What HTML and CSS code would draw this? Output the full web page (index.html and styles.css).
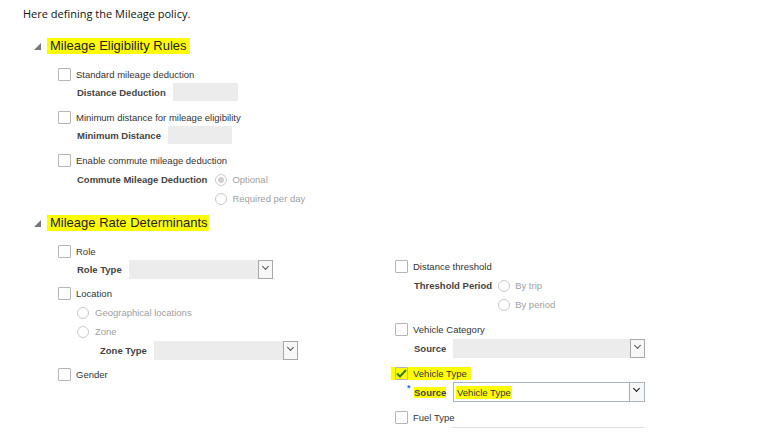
FILE: index.html
```html
<!DOCTYPE html>
<html lang="en">
  <head>
    <meta charset="UTF-8" />
    <title>Mileage Policy</title>
    <link rel="stylesheet" href="styles.css">
  </head>
  <body>
    <p class="intro">Here defining the Mileage policy.</p>

    <div class="section">
      <div class="section-title"><span class="caret"></span><span class="mark">Mileage Eligibility Rules</span></div>
      <div class="section-body">
        <div class="item">
          <div class="check-row"><span class="box"></span><span>Standard mileage deduction</span></div>
          <div class="field-row">
            <label class="field-label">Distance Deduction</label>
            <span class="text-input w65"></span>
          </div>
        </div>
        <div class="item">
          <div class="check-row"><span class="box"></span><span>Minimum distance for mileage eligibility</span></div>
          <div class="field-row">
            <label class="field-label">Minimum Distance</label>
            <span class="text-input w64"></span>
          </div>
        </div>
        <div class="item">
          <div class="check-row"><span class="box"></span><span>Enable commute mileage deduction</span></div>
          <div class="radio-group commute">
            <label class="field-label">Commute Mileage Deduction</label>
            <div class="radios">
              <div class="radio-row"><span class="radio on"></span><span>Optional</span></div>
              <div class="radio-row"><span class="radio"></span><span>Required per day</span></div>
            </div>
          </div>
        </div>
      </div>
    </div>

    <div class="section second">
      <div class="section-title"><span class="caret"></span><span class="mark">Mileage Rate Determinants</span></div>
      <div class="columns">
        <div class="col left">
          <div class="item">
            <div class="check-row"><span class="box"></span><span>Role</span></div>
            <div class="field-row">
              <label class="field-label">Role Type</label>
              <span class="select w144"><span class="arrow"></span></span>
            </div>
          </div>
          <div class="item">
            <div class="check-row"><span class="box"></span><span>Location</span></div>
            <div class="loc-radios">
              <div class="radio-row"><span class="radio"></span><span>Geographical locations</span></div>
              <div class="radio-row"><span class="radio"></span><span>Zone</span></div>
            </div>
            <div class="field-row zone">
              <label class="field-label">Zone Type</label>
              <span class="select w144"><span class="arrow"></span></span>
            </div>
          </div>
          <div class="item">
            <div class="check-row"><span class="box"></span><span>Gender</span></div>
          </div>
        </div>

        <div class="col right">
          <div class="item spaced">
            <div class="check-row"><span class="box"></span><span>Distance threshold</span></div>
            <div class="radio-group">
              <label class="field-label">Threshold Period</label>
              <div class="radios">
                <div class="radio-row"><span class="radio"></span><span>By trip</span></div>
                <div class="radio-row"><span class="radio"></span><span>By period</span></div>
              </div>
            </div>
          </div>
          <div class="item">
            <div class="check-row"><span class="box"></span><span>Vehicle Category</span></div>
            <div class="field-row">
              <label class="field-label src">Source</label>
              <span class="select w192"><span class="arrow"></span></span>
            </div>
          </div>
          <div class="item">
            <div class="check-row marked">
              <span class="box checked">
                <svg width="11" height="9" viewBox="0 0 11 9"><path d="M1 4.5 L4 7.5 L10 1" fill="none" stroke="#2e7d1e" stroke-width="2"/></svg>
              </span>
              <span>Vehicle Type</span>
            </div>
            <div class="field-row">
              <label class="field-label src req"><span class="star">*</span><span class="mark">Source</span></label>
              <span class="select w192 active"><span class="value mark">Vehicle Type</span><span class="arrow"></span></span>
            </div>
          </div>
          <div class="item">
            <div class="check-row"><span class="box"></span><span>Fuel Type</span></div>
            <div class="underline"></div>
          </div>
        </div>
      </div>
    </div>
  </body>
</html>
```

FILE: styles.css
```css
body {
  margin: 0;
  padding: 0;
  background-color: #fff;
  font-family: "Liberation Sans", Arial, sans-serif;
  font-size: 9.5px;
  color: #333;
}

.intro {
  margin: 0;
  padding: 6px 0 0 23px;
  font-family: "Open Sans", sans-serif;
  font-size: 11px;
  color: #111;
  line-height: 16px;
}

.section {
  padding-left: 34px;
}

.section-title {
  display: flex;
  align-items: center;
  height: 16px;
  margin-top: 16px;
  font-size: 13px;
  color: #222;
}

.caret {
  width: 0;
  height: 0;
  border-left: 7px solid transparent;
  border-bottom: 7px solid #777;
  margin-right: 6px;
}

.mark {
  background-color: #ffff00;
}

.section-title .mark {
  padding: 1px 3px 1px 3px;
  line-height: 14px;
}

.section-body {
  padding: 14px 0 0 24px;
}

.item {
  margin-bottom: 10px;
}

.check-row {
  display: flex;
  align-items: center;
  height: 13px;
  gap: 5px;
}

.box {
  display: inline-flex;
  align-items: center;
  justify-content: center;
  width: 11px;
  height: 11px;
  border: 1px solid #b5b5b5;
  border-radius: 1px;
  background-color: #fff;
  flex-shrink: 0;
}

.field-row {
  display: flex;
  align-items: center;
  gap: 7px;
  margin-top: 2px;
  padding-left: 19px;
  height: 18px;
}

.field-label {
  font-weight: bold;
  color: #444;
}

.text-input {
  display: inline-block;
  height: 18px;
  background-color: #ececec;
}

.w64 { width: 64px; }
.w65 { width: 65px; }
.w144 { width: 144px; }
.w192 { width: 192px; }

.radio-group {
  display: flex;
  align-items: flex-start;
  gap: 6px;
  padding-left: 19px;
  margin-top: 7px;
}

.radio-group.commute {
  gap: 8px;
}

.radio-group .field-label {
  line-height: 12px;
}

.radios {
  display: flex;
  flex-direction: column;
  gap: 8px;
}

.radio-row {
  display: flex;
  align-items: center;
  gap: 5px;
  height: 11px;
  color: #a0a0a0;
}

.radio {
  width: 10px;
  height: 10px;
  border: 1px solid #c9c9c9;
  border-radius: 50%;
  background-color: #fff;
  position: relative;
}

.radio.on::after {
  content: "";
  position: absolute;
  left: 2px;
  top: 2px;
  width: 6px;
  height: 6px;
  border-radius: 50%;
  background-color: #cfcfcf;
}

.second .section-title {
  margin-top: 11px;
}

.second .section-title .mark {
  padding-right: 1px;
}

.columns {
  display: flex;
  padding: 14px 0 0 24px;
}

.col.left {
  width: 337px;
}

.col.right {
  padding-top: 15px;
}

.select {
  display: inline-flex;
  justify-content: space-between;
  align-items: stretch;
  height: 19px;
  background-color: #ececec;
  box-sizing: border-box;
}

.select .arrow {
  width: 15px;
  margin-left: auto;
  border: 1px solid #a8a8a8;
  background-color: #f7f7f7;
  box-sizing: border-box;
  position: relative;
}

.select .arrow::after {
  content: "";
  position: absolute;
  left: 4px;
  top: 3px;
  width: 4px;
  height: 4px;
  border-right: 1.5px solid #555;
  border-bottom: 1.5px solid #555;
  transform: rotate(45deg);
}

.select.active {
  background-color: #fff;
  border: 1px solid #a8b4c0;
  height: 20px;
}

.select.active .arrow {
  border-width: 0 0 0 1px;
}

.select.active .arrow::after {
  border-color: #111;
}

.select .value {
  align-self: center;
  margin-left: 2px;
  color: #333;
  padding: 1px 1px;
}

.loc-radios {
  display: flex;
  flex-direction: column;
  gap: 8px;
  padding-left: 19px;
  margin-top: 7px;
}

.loc-radios .radio-row {
  gap: 6px;
}

.field-row.zone {
  padding-left: 42px;
  margin-top: 4px;
}

.col.left .item:first-child .field-row {
  margin-top: 2px;
}

.col.left .item {
  margin-bottom: 9px;
}

.col.right .radio-group {
  margin-top: 7px;
}

.col.right .item {
  margin-bottom: 10px;
}

.col.right .item.spaced {
  margin-bottom: 13px;
}

.col.right .field-row {
  margin-top: 3px;
}

.field-label.src {
  width: 32px;
}

.field-label.req {
  position: relative;
}

.star {
  position: absolute;
  left: -7px;
  top: -4px;
  color: #2a6fc9;
  font-size: 9px;
}

.check-row.marked {
  background-color: #ffff00;
  width: 76px;
  margin-left: -4px;
  padding-left: 4px;
}

.box.checked {
  background-color: #ffff00;
}

.underline {
  margin: 3px 0 0 57px;
  width: 192px;
  border-top: 1px solid #dedede;
}
```
